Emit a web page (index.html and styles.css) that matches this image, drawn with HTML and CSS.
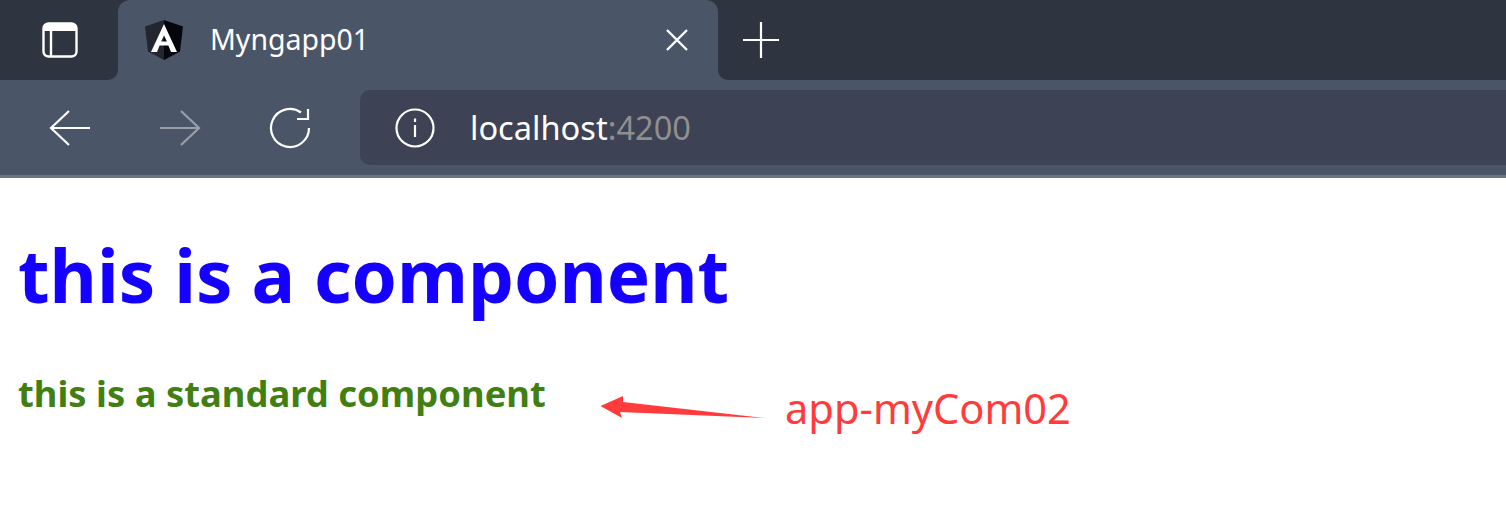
FILE: index.html
```html
<!DOCTYPE html>
<html lang="en">
<head>
    <meta charset="UTF-8">
    <title>Myngapp01</title>
    <link rel="stylesheet" href="styles.css">
</head>
<body>
    <div class="browser">
        <div class="tabstrip">
            <div class="strip-left">
                <svg class="icon" width="36" height="36" viewBox="0 0 36 36" fill="none" stroke="#fff">
                    <rect x="1.5" y="1.5" width="33" height="33" rx="5" stroke-width="2.4"/>
                    <path d="M2 5.5h32" stroke-width="7"/>
                    <path d="M9 8v26" stroke-width="2.4"/>
                </svg>
            </div>
            <div class="tab">
                <svg class="favicon" width="42" height="42" viewBox="0 0 42 42">
                    <path d="M21 1 2 7.5l3 25L21 41z" fill="#23262e"/>
                    <path d="M21 1l19 6.5-3 25L21 41z" fill="#04060c"/>
                    <path d="M21 5 8 33h6l2.6-6.5h8.8L28 33h6zm0 11.5 2.9 6h-5.8z" fill="#fff" fill-rule="evenodd"/>
                </svg>
                <span class="tab-title">Myngapp01</span>
                <svg class="tab-close" width="22" height="22" viewBox="0 0 22 22" stroke="#fff" stroke-width="2.4">
                    <path d="M1 1l20 20M21 1 1 21"/>
                </svg>
            </div>
            <div class="strip-right">
                <svg width="36" height="36" viewBox="0 0 36 36" stroke="#fff" stroke-width="2.2">
                    <path d="M0 18h36M18 0v36"/>
                </svg>
            </div>
        </div>
        <div class="toolbar">
            <div class="nav-buttons">
                <svg width="42" height="36" viewBox="0 0 42 36" fill="none" stroke="#fff" stroke-width="2.2">
                    <path d="M41 18H2M20 1 2 18l18 17"/>
                </svg>
                <svg width="42" height="36" viewBox="0 0 42 36" fill="none" stroke="#9a9fa9" stroke-width="2.2">
                    <path d="M1 18h39M22 1l18 17-18 17"/>
                </svg>
                <svg width="42" height="42" viewBox="0 0 42 42" fill="none" stroke="#fff" stroke-width="2.2">
                    <path d="M32 5.5A19 19 0 1 0 40 21"/>
                    <path d="M28 12h11V2"/>
                </svg>
            </div>
            <div class="address-bar">
                <svg width="40" height="40" viewBox="0 0 40 40" fill="none" stroke="#fff" stroke-width="2.2">
                    <circle cx="20" cy="20" r="18.5"/>
                    <path d="M20 17v12M20 10.5v3.5"/>
                </svg>
                <span class="url">localhost<span class="port">:4200</span></span>
            </div>
        </div>
    </div>
    <div class="page">
        <h1>this is a component</h1>
        <h2>this is a standard component</h2>
        <svg class="note-arrow" width="170" height="30" viewBox="0 0 170 30">
            <path d="M0.5 11 23 1l0 6 142 16-145-6 2 6z" fill="#ff3b3b"/>
        </svg>
        <span class="note">app-myCom02</span>
    </div>
</body>
</html>
```

FILE: styles.css
```css
body {
    margin: 0;
    background: #fff;
    font-family: "Noto Sans", "Open Sans", sans-serif;
    overflow: hidden;
}

.browser {
    background: #4a5568;
    border-bottom: 3px solid #6d7582;
}

.tabstrip {
    display: flex;
    height: 80px;
    background: linear-gradient(#2e3440 50%, #4a5568 50%);
}

.strip-left {
    width: 118px;
    display: flex;
    align-items: center;
    justify-content: center;
    box-sizing: border-box;
    padding-left: 2px;
    background: #2e3440;
    border-bottom-right-radius: 10px;
}

.tab {
    width: 600px;
    display: flex;
    align-items: center;
    box-sizing: border-box;
    padding: 0 30px 0 25px;
    border-top-left-radius: 12px;
    border-top-right-radius: 12px;
    background: #4a5568;
}

.tab-title {
    flex: 1;
    margin-left: 25px;
    margin-bottom: 2px;
    color: #fff;
    font-size: 28.5px;
}

.strip-right {
    flex: 1;
    display: flex;
    align-items: center;
    box-sizing: border-box;
    padding-left: 25px;
    background: #2e3440;
    border-bottom-left-radius: 10px;
}

.toolbar {
    display: flex;
    height: 95px;
    padding-top: 10px;
    box-sizing: border-box;
}

.nav-buttons {
    width: 360px;
    display: flex;
    align-items: center;
    gap: 68px;
    box-sizing: border-box;
    padding: 0 0 10px 49px;
}

.address-bar {
    flex: 1;
    height: 75px;
    display: flex;
    align-items: center;
    gap: 35px;
    box-sizing: border-box;
    padding-left: 35px;
    background: #3d4254;
    border-top-left-radius: 10px;
    border-bottom-left-radius: 10px;
}

.url {
    color: #fff;
    font-size: 32.6px;
}

.port {
    color: #8f8f8f;
}

.page {
    padding: 0 18px;
}

h1 {
    margin: 47px 0 0;
    color: #1500ff;
    font-size: 72.8px;
    line-height: 100px;
    font-weight: 700;
}

h2 {
    margin: 43px 0 0;
    color: #417f12;
    font-size: 36.4px;
    line-height: 50px;
    font-weight: 700;
}

/* hand drawn annotation on top of the page */
.note-arrow {
    position: absolute;
    left: 600px;
    top: 395px;
}

.note {
    position: absolute;
    left: 785px;
    top: 379px;
    color: #ff3b3b;
    font-size: 41.6px;
    line-height: 58px;
}
```
